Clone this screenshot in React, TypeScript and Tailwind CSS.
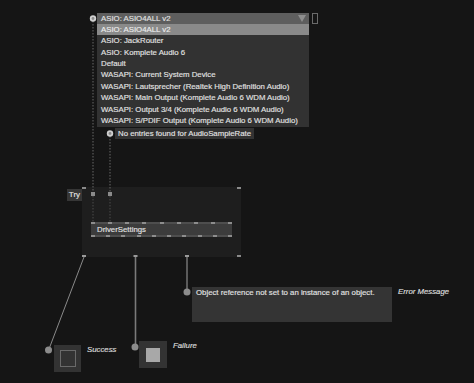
import React from "react";

const font = { fontFamily: '"Liberation Sans", Arial, sans-serif' };

const items = [
  "ASIO: ASIO4ALL v2",
  "ASIO: JackRouter",
  "ASIO: Komplete Audio 6",
  "Default",
  "WASAPI: Current System Device",
  "WASAPI: Lautsprecher (Realtek High Definition Audio)",
  "WASAPI: Main Output (Komplete Audio 6 WDM Audio)",
  "WASAPI: Output 3/4 (Komplete Audio 6 WDM Audio)",
  "WASAPI: S/PDIF Output (Komplete Audio 6 WDM Audio)",
];

function PinRow({ n }: { n: number }) {
  return (
    <div className="flex h-[2px] justify-between bg-[#4e4e4e]">
      {Array.from({ length: n }).map((_, i) => (
        <span key={i} className="h-[2px] w-[4px] bg-[#8d8d8d]" />
      ))}
    </div>
  );
}

export default function App() {
  return (
    <div
      className="relative h-[383px] w-[474px] overflow-hidden bg-[#151515] text-[7.8px] leading-none text-[#e2e2e2] [-webkit-text-stroke:0.15px_#e2e2e2]"
      style={font}
    >
      {/* Try region */}
      <div className="absolute left-[67px] top-[187px] flex items-start">
        <div className="mt-[2px] flex h-[12px] w-[15px] items-center justify-center bg-[#363636] text-[8px]">
          Try
        </div>
        <div className="h-[70px] w-[159px] bg-[#1e1e1e]" />
      </div>

      {/* connections */}
      <svg className="absolute left-0 top-0" width="474" height="383">
        <line x1="93" y1="21" x2="93" y2="193" stroke="#5a5a5a" strokeWidth="1.2" strokeDasharray="1.5 1.5" />
        <line x1="110" y1="136" x2="110" y2="193" stroke="#5a5a5a" strokeWidth="1.2" strokeDasharray="1.5 1.5" />
        <line x1="93" y1="196" x2="93" y2="223" stroke="#4a4a4a" strokeWidth="1" strokeDasharray="1.5 1.5" />
        <line x1="110" y1="196" x2="110" y2="223" stroke="#4a4a4a" strokeWidth="1" strokeDasharray="1.5 1.5" />
        <line x1="84" y1="257" x2="49" y2="349" stroke="#8a8a8a" strokeWidth="1" />
        <line x1="135.5" y1="257" x2="135.5" y2="346" stroke="#7a7a7a" strokeWidth="1.6" />
        <line x1="187" y1="257" x2="187" y2="291" stroke="#7a7a7a" strokeWidth="1.4" />
        <rect x="82" y="187" width="4" height="2" fill="#8a8a8a" />
        <rect x="237" y="187" width="4" height="2" fill="#8a8a8a" />
        <rect x="82" y="255" width="4" height="2" fill="#9a9a9a" />
        <rect x="133.5" y="255" width="4" height="2" fill="#9a9a9a" />
        <rect x="185" y="255" width="4" height="2" fill="#9a9a9a" />
        <rect x="237" y="255" width="4" height="2" fill="#8a8a8a" />
        <rect x="91" y="192" width="4" height="4" fill="#8a8a8a" />
        <rect x="108" y="192" width="4" height="4" fill="#8a8a8a" />
        <circle cx="93" cy="18.5" r="3.2" fill="#d0d0d0" />
        <circle cx="93" cy="18.5" r="1.4" fill="#8a8a8a" />
        <circle cx="110" cy="133.5" r="3.2" fill="#cfcfcf" />
        <circle cx="110" cy="133.5" r="1.4" fill="#8a8a8a" />
        <circle cx="187" cy="292" r="3.5" fill="#8c8c8c" />
        <circle cx="48.5" cy="350" r="3.5" fill="#8c8c8c" />
        <circle cx="135" cy="347" r="3.5" fill="#8c8c8c" />
      </svg>

      {/* Dropdown */}
      <div className="absolute left-[97px] top-[13px] flex items-start gap-[3px]">
        <div className="flex w-[212px] flex-col">
          <div className="flex h-[11px] items-center justify-between bg-[#5e5e5e] pl-[4px] pr-[3px]">
            <span>ASIO: ASIO4ALL v2</span>
            <svg width="8" height="7" viewBox="0 0 8 7">
              <polygon points="0,0 8,0 4,7" fill="#8e8e8e" />
            </svg>
          </div>
          <div className="flex flex-col bg-[#323232]">
            {items.map((t, i) => (
              <div
                key={t}
                className={
                  "flex h-[11.4px] items-center pl-[4px] " +
                  (i === 0 ? "bg-[#8a8a8a] text-[#f0f0f0]" : "")
                }
              >
                {t}
              </div>
            ))}
          </div>
        </div>
        <div className="h-[11px] w-[6px] border border-[#6a6a6a]" />
      </div>

      {/* No entries label */}
      <div className="absolute left-[115px] top-[128px] flex h-[11px] items-center bg-[#333333] px-[3px]">
        No entries found for AudioSampleRate
      </div>

      {/* DriverSettings node */}
      <div className="absolute left-[91px] top-[222px] flex h-[15px] w-[141px] flex-col justify-between bg-[#3c3c3c]">
        <PinRow n={9} />
        <div className="pl-[6px]">DriverSettings</div>
        <PinRow n={10} />
      </div>

      {/* Error message */}
      <div className="absolute left-[192px] top-[287px] flex items-start gap-[6px]">
        <div className="h-[35px] w-[200px] bg-[#343434] pl-[4px] pt-[2px]">
          Object reference not set to an instance of an object.
        </div>
        <div className="mt-[1px] italic text-[#d8d8d8]">Error Message</div>
      </div>

      {/* Success */}
      <div className="absolute left-[54px] top-[345px] flex items-start gap-[6px]">
        <div className="flex h-[27px] w-[27px] items-center justify-center bg-[#333333]">
          <div className="h-[17px] w-[16px] border border-[#6a6a6a]" />
        </div>
        <div className="mt-[1px] italic text-[#d8d8d8]">Success</div>
      </div>

      {/* Failure */}
      <div className="absolute left-[139px] top-[341px] flex items-start gap-[6px]">
        <div className="flex h-[27px] w-[28px] items-center justify-center bg-[#333333]">
          <div className="h-[14px] w-[14px] bg-[#a8a8a8]" />
        </div>
        <div className="mt-[1px] italic text-[#d8d8d8]">Failure</div>
      </div>
    </div>
  );
}
